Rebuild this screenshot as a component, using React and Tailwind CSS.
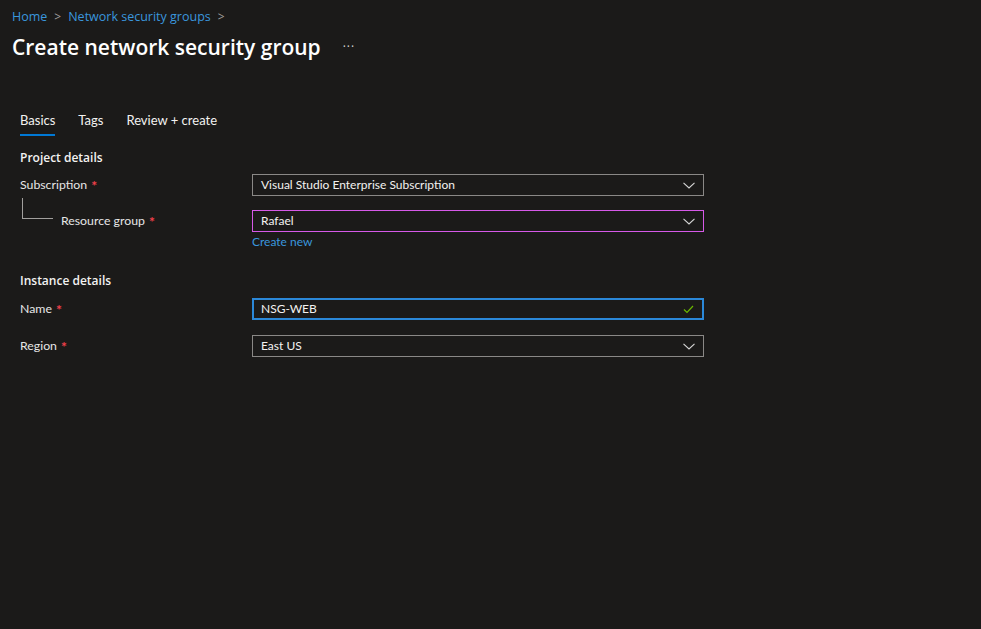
import React from 'react';

const font = { fontFamily: '"Segoe UI", "Open Sans", "Liberation Sans", sans-serif' };
const body = { fontFamily: 'Lato, "Open Sans", sans-serif' };

const Chevron = () => (
  <svg width="12" height="7" viewBox="0 0 12 7" className="shrink-0">
    <path d="M0.5 0.8 L6 6 L11.5 0.8" fill="none" stroke="#d6d6d6" strokeWidth="1.1" />
  </svg>
);

const Check = () => (
  <svg width="11" height="9" viewBox="0 0 11 9" className="shrink-0">
    <path d="M1 4.5 L4 7.5 L10 1" fill="none" stroke="#6bb700" strokeWidth="1.2" />
  </svg>
);

const Label = ({ children }) => (
  <span className="flex items-center gap-[4px] text-[12.3px] text-[#e6e6e6] leading-none" style={body}>
    {children}
    <span className="text-[#f1404b] text-[14px] font-bold leading-none mt-[1px]">*</span>
  </span>
);

const Field = ({ value, border = 'border-[#8a8886]', icon = <Chevron />, wide }) => (
  <div
    className={`w-[452px] h-[22px] flex items-center justify-between pr-[8px] bg-[#1b1a19] ${wide ? 'border-2 pl-[7px]' : 'border pl-[8px]'} ${border}`}
  >
    <span className="text-[12px] text-[#f3f2f1] leading-none" style={body}>{value}</span>
    {icon}
  </div>
);

const Row = ({ label, children, className = '' }) => (
  <div className={`flex items-start ${className}`}>
    <div className="w-[232px] h-[22px] flex items-center">
      <Label>{label}</Label>
    </div>
    {children}
  </div>
);

export default function App() {
  return (
    <div className="w-[981px] h-[629px] bg-[#1b1a19] text-white overflow-hidden" style={font}>
      {/* breadcrumb */}
      <div className="flex items-center gap-[7px] pl-[12px] pt-[11px] h-[23px] text-[12.5px] text-[#3a96dd]">
        <span>Home</span>
        <span className="text-[#a19f9d] text-[12px]">&gt;</span>
        <span>Network security groups</span>
        <span className="text-[#a19f9d] text-[12px]">&gt;</span>
      </div>

      {/* title */}
      <div className="flex items-center pl-[12px] mt-[11px] h-[26px]">
        <h1 className="text-[21px] font-semibold text-white leading-none">Create network security group</h1>
        <span className="ml-[22px] text-[12px] text-[#d6d6d6] tracking-[1px]">···</span>
      </div>

      {/* tabs */}
      <div className="flex items-start gap-[23px] pl-[20px] mt-[50px] text-[13px] text-[#f3f2f1]" style={body}>
        <div className="flex flex-col">
          <span className="leading-[20px]">Basics</span>
          <div className="h-[2px] bg-[#0078d4] mt-[4px]" />
        </div>
        <span className="leading-[20px]">Tags</span>
        <span className="leading-[20px]">Review + create</span>
      </div>

      <div className="pl-[20px] mt-[12px]">
        <h2 className="text-[12px] font-semibold text-[#f3f2f1] leading-[20px]">Project details</h2>

        <Row label="Subscription" className="mt-[6px]">
          <Field value="Visual Studio Enterprise Subscription" />
        </Row>

        <div className="flex items-start mt-[14px]">
          <div className="w-[232px] h-[22px] flex items-center relative">
            <div className="absolute left-[2px] -top-[12px] w-[31px] h-[21px] border-l border-b border-[#a19f9d]" />
            <span className="ml-[41px]">
              <Label>Resource group</Label>
            </span>
          </div>
          <div className="flex flex-col">
            <Field value="Rafael" border="border-[#d659e8]" />
            <span className="text-[12px] text-[#3a96dd] leading-[20px]" style={body}>Create new</span>
          </div>
        </div>

        <h2 className="text-[12px] font-semibold text-[#f3f2f1] leading-[20px] mt-[19px]">Instance details</h2>

        <Row label="Name" className="mt-[7px]">
          <Field value="NSG-WEB" border="border-[#2b88d8]" icon={<Check />} wide />
        </Row>

        <Row label="Region" className="mt-[15px]">
          <Field value="East US" />
        </Row>
      </div>
    </div>
  );
}
